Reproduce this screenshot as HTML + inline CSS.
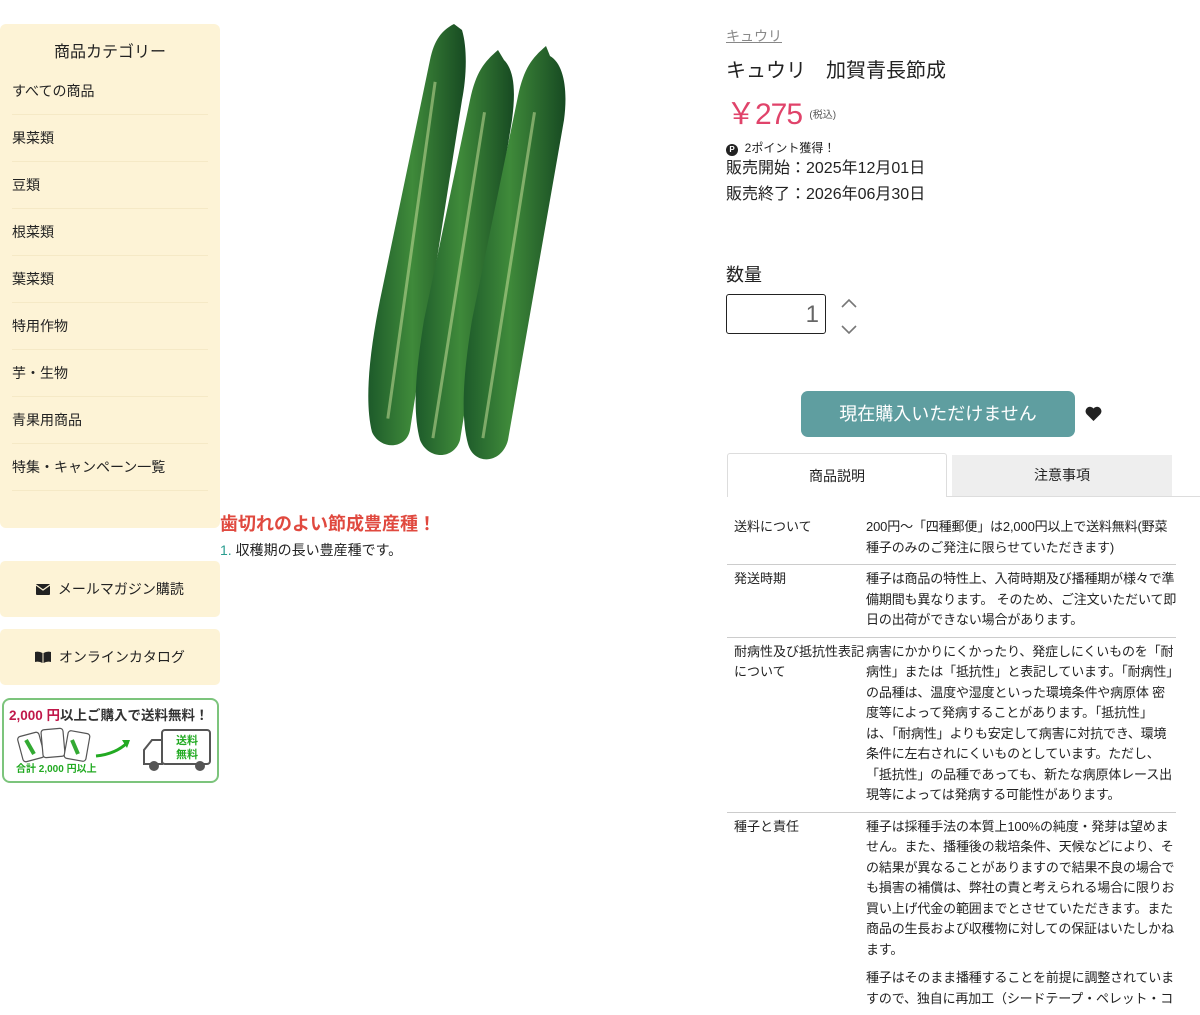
<!DOCTYPE html>
<html><head><meta charset="utf-8">
<style>
*{box-sizing:border-box;margin:0;padding:0}
body{width:1200px;height:1000px;overflow:hidden;background:#fff;font-family:"Liberation Sans","Noto Sans CJK JP",sans-serif;color:#222;position:relative}
.abs{position:absolute}
.side{left:0;top:24px;width:220px;height:504px;background:#fdf3d6;border-radius:6px}
.side h3{font-weight:normal;font-size:16px;text-align:center;margin-top:19px;line-height:20px}
.side ul{list-style:none;padding:0 12px;margin-top:5px}
.side li{font-size:14px;height:47px;line-height:20px;padding-top:13px;border-bottom:1px solid #f5e9c6}
.btn{left:0;width:220px;height:56px;background:#fdf3d6;border-radius:5px;font-size:14px;text-align:center;line-height:56px}
.tbl{left:727px;top:513px;width:449px;font-size:13px;line-height:20.5px;color:#222}
.row{display:flex;border-bottom:1px solid #ccc;padding:4px 0 6px 7px}
.row .l{width:132px;flex:none}
.row .r{width:313px;flex:none;white-space:nowrap;letter-spacing:-0.15px}
</style></head><body>
<div class="abs side">
<h3>商品カテゴリー</h3>
<ul>
<li>すべての商品</li><li>果菜類</li><li>豆類</li><li>根菜類</li><li>葉菜類</li><li>特用作物</li><li>芋・生物</li><li>青果用商品</li><li>特集・キャンペーン一覧</li>
</ul>
</div>
<div class="abs btn" style="top:561px"><svg width="14" height="11" style="vertical-align:-1px"><rect width="14" height="11" rx="1" fill="#222"/><path d="M0 1l7 5 7-5" stroke="#fdf3d6" stroke-width="1.3" fill="none"/></svg>&nbsp; メールマガジン購読</div>
<div class="abs btn" style="top:629px"><svg width="16" height="12" style="vertical-align:-1px"><path d="M0 1q4-1 7.5 1v10q-3.5-2-7.5-1zM16 1q-4-1-7.5 1v10q3.5-2 7.5-1z" fill="#222"/></svg>&nbsp; オンラインカタログ</div>
<div class="abs" style="left:2px;top:698px;width:217px;height:85px;border:2px solid #7cc47c;border-radius:8px;background:#fff">
<div style="font-size:13.5px;font-weight:bold;color:#333;padding:4px 0 0 5px;white-space:nowrap"><span style="color:#c0184a">2,000 円</span>以上ご購入で送料無料！</div>
<svg class="abs" style="left:12px;top:26px" width="200" height="50"><g fill="#fff" stroke="#555" stroke-width="1.2"><rect x="4" y="8" width="22" height="26" rx="3" transform="rotate(-15 15 21)"/><rect x="26" y="3" width="22" height="28" rx="3" transform="rotate(-5 37 17)"/><rect x="50" y="6" width="22" height="28" rx="3" transform="rotate(10 61 20)"/></g><path d="M10 14l8 14M56 14l6 14" stroke="#3a3" stroke-width="4"/><path d="M80 30 Q100 28 112 16" stroke="#2a2" stroke-width="3" fill="none"/><path d="M106 14l8 0-3 8z" fill="#2a2"/><rect x="146" y="4" width="48" height="34" rx="3" fill="#fff" stroke="#555" stroke-width="2"/><path d="M146 14h-10l-8 10v14h18z" fill="#fff" stroke="#555" stroke-width="2"/><circle cx="138" cy="40" r="5" fill="#555"/><circle cx="184" cy="40" r="5" fill="#555"/><text x="160" y="18" font-size="11" fill="#2a2" font-weight="bold">送料</text><text x="160" y="32" font-size="11" fill="#2a2" font-weight="bold">無料</text><text x="0" y="46" font-size="10" fill="#2a2" font-weight="bold">合計 2,000 円以上</text></svg>
</div>
<svg class="abs" style="left:350px;top:20px" width="230" height="450">
<defs><linearGradient id="g" x1="0" x2="1"><stop offset="0" stop-color="#1d5a2a"/><stop offset=".45" stop-color="#3f8a3a"/><stop offset="1" stop-color="#174a22"/></linearGradient></defs>
<g fill="url(#g)">
<path d="M104 4 L112 10 C118 30 116 60 112 80 L60 410 C56 430 30 430 22 412 C14 380 20 330 30 280 L80 40 C84 20 92 10 104 4z"/>
<path d="M148 30 L154 40 C164 50 166 70 162 100 L110 420 C104 440 78 440 70 420 C62 390 66 350 74 300 L120 80 C126 52 134 42 148 30z"/>
<path d="M196 26 L200 36 C214 44 218 70 214 100 L158 420 C152 444 124 446 118 424 C110 394 114 350 122 300 L168 76 C174 48 182 38 196 26z"/>
</g>
<g fill="#cfe4a0" opacity=".5"><rect x="60" y="60" width="3" height="340" transform="rotate(8 60 230)"/><rect x="108" y="90" width="3" height="330" transform="rotate(9 108 250)"/><rect x="158" y="90" width="3" height="330" transform="rotate(9 158 250)"/></g>
</svg>
<div class="abs" style="left:220px;top:510px;font-size:18px;font-weight:bold;color:#e0493f">歯切れのよい節成豊産種！</div>
<div class="abs" style="left:220px;top:540px;font-size:14px"><span style="color:#2a9d8f">1.</span> 収穫期の長い豊産種です。</div>

<div class="abs" style="left:726px;top:26px;font-size:14px;color:#888;text-decoration:underline">キュウリ</div>
<div class="abs" style="left:726px;top:54px;font-size:20px">キュウリ　加賀青長節成</div>
<div class="abs" style="left:726px;top:96px;font-size:30px;color:#e0436a;line-height:38px;letter-spacing:-1px">￥275 <span style="font-size:10px;color:#555;vertical-align:middle;letter-spacing:0">(税込)</span></div>
<div class="abs" style="left:726px;top:139px;font-size:12px"><span style="display:inline-block;width:12px;height:12px;border-radius:50%;background:#222;color:#fff;font-size:8px;text-align:center;line-height:12px;font-weight:bold">P</span>&nbsp; 2ポイント獲得！</div>
<div class="abs" style="left:726px;top:156px;font-size:16px;line-height:26px">販売開始：2025年12月01日<br>販売終了：2026年06月30日</div>
<div class="abs" style="left:726px;top:261px;font-size:18px">数量</div>
<div class="abs" style="left:726px;top:294px;width:100px;height:40px;border:1px solid #222;border-radius:3px;font-size:24px;color:#666;text-align:right;padding-right:6px;line-height:40px">1</div>
<svg class="abs" style="left:840px;top:296px" width="18" height="44" fill="none" stroke="#777" stroke-width="1.6"><path d="M2 11l7-7 7 7M2 30l7 7 7-7"/></svg>
<div class="abs" style="left:801px;top:391px;width:274px;height:46px;background:#5f9ea0;border-radius:7px;color:#fff;font-size:18px;text-align:center;line-height:46px">現在購入いただけません</div>
<svg class="abs" style="left:1085px;top:406px" width="17" height="15"><path d="M8.5 15L1.5 8A4.2 4.2 0 0 1 8.5 2.5 4.2 4.2 0 0 1 15.5 8z" fill="#222"/></svg>
<div class="abs" style="left:727px;top:453px;width:220px;height:44px;border:1px solid #ddd;border-bottom:none;border-radius:3px 3px 0 0;background:#fff;text-align:center;line-height:44px;font-size:14px">商品説明</div>
<div class="abs" style="left:952px;top:455px;width:220px;height:41px;background:#eee;text-align:center;line-height:41px;font-size:14px">注意事項</div>
<div class="abs" style="left:947px;top:496px;width:253px;border-top:1px solid #ddd"></div>
<div class="abs tbl">
<div class="row"><div class="l">送料について</div><div class="r">200円〜「四種郵便」は2,000円以上で送料無料(野菜<br>種子のみのご発注に限らせていただきます)</div></div>
<div class="row"><div class="l">発送時期</div><div class="r">種子は商品の特性上、入荷時期及び播種期が様々で準<br>備期間も異なります。 そのため、ご注文いただいて即<br>日の出荷ができない場合があります。</div></div>
<div class="row"><div class="l">耐病性及び抵抗性表記<br>について</div><div class="r">病害にかかりにくかったり、発症しにくいものを「耐<br>病性」または「抵抗性」と表記しています。「耐病性」<br>の品種は、温度や湿度といった環境条件や病原体 密<br>度等によって発病することがあります。「抵抗性」<br>は、「耐病性」よりも安定して病害に対抗でき、環境<br>条件に左右されにくいものとしています。ただし、<br>「抵抗性」の品種であっても、新たな病原体レース出<br>現等によっては発病する可能性があります。</div></div>
<div class="row" style="border:none"><div class="l">種子と責任</div><div class="r">種子は採種手法の本質上100%の純度・発芽は望めま<br>せん。また、播種後の栽培条件、天候などにより、そ<br>の結果が異なることがありますので結果不良の場合で<br>も損害の補償は、弊社の責と考えられる場合に限りお<br>買い上げ代金の範囲までとさせていただきます。また<br>商品の生長および収穫物に対しての保証はいたしかね<br>ます。<div style="margin-top:8px">種子はそのまま播種することを前提に調整されていま<br>すので、独自に再加工（シードテープ・ペレット・コ</div></div></div>
</div>
</body></html>
